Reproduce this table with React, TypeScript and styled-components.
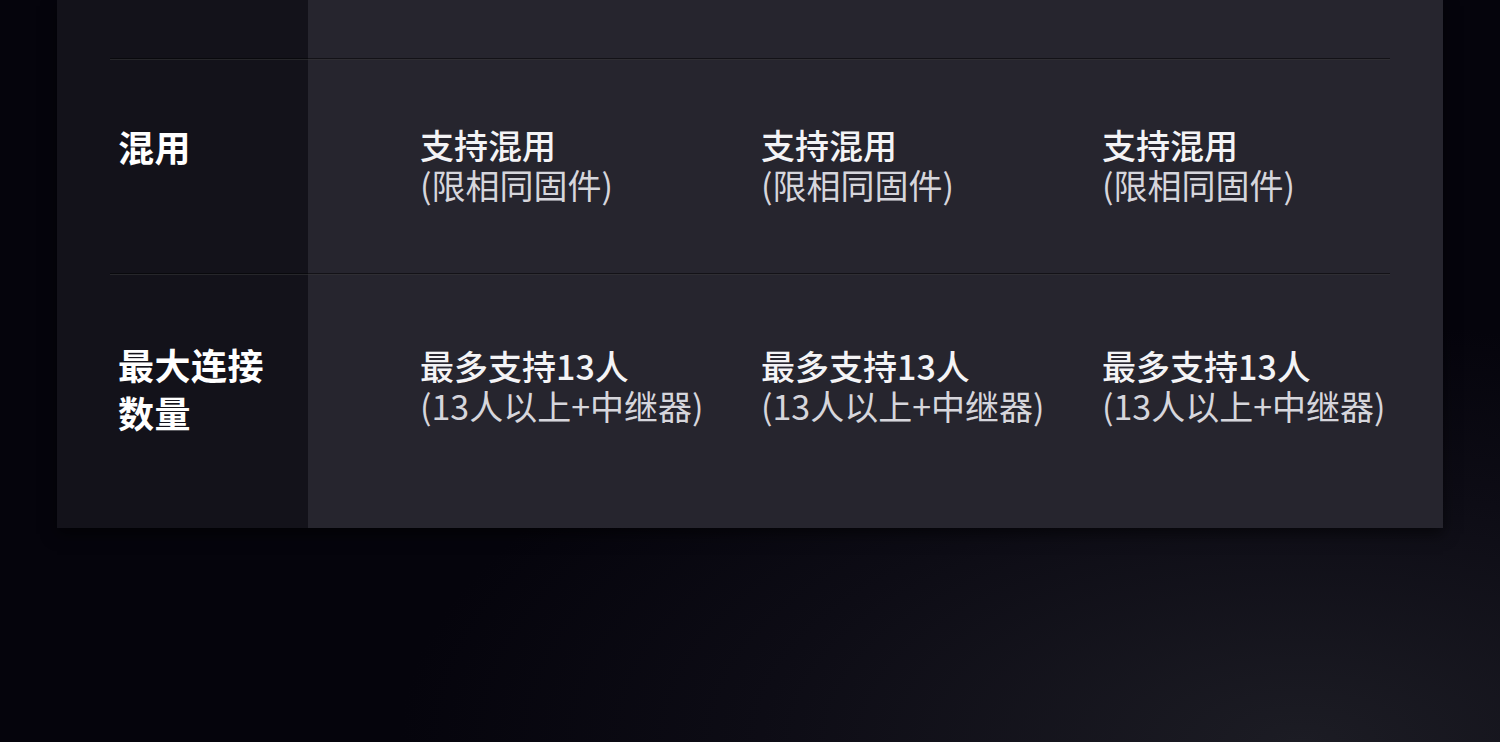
import React from 'react'
import styled, { createGlobalStyle } from 'styled-components'

const GlobalStyle = createGlobalStyle`
  html, body {
    margin: 0;
    padding: 0;
    height: 100%;
  }
  body {
    background: radial-gradient(ellipse 900px 420px at 1300px 742px, #1c1c24 0%, #0d0c15 60%, #05040c 100%), #05040c;
    background-color: #05040c;
    font-family: 'Noto Sans CJK SC', 'Noto Sans', sans-serif;
    overflow: hidden;
  }
`

type Spec = {
  label: string[]
  main: string
  note: string
  labelTop: number
  dataTop: number
  bottom: number
}

const specs: Spec[] = [
  { label: ['混用'], main: '支持混用', note: '(限相同固件)', labelTop: 64, dataTop: 67, bottom: 68 },
  {
    label: ['最大连接', '数量'],
    main: '最多支持13人',
    note: '(13人以上+中继器)',
    labelTop: 67,
    dataTop: 73,
    bottom: 92,
  },
]

const App: React.FC = () => (
  <>
    <GlobalStyle />
    <Page>
      <Table>
        <Row $height={58}>
          <LabelCell $top={0} $bottom={0} />
          <DataCell $top={0} $bottom={0} />
        </Row>
        {specs.map(spec => (
          <Row key={spec.main} $divider>
            <LabelCell $top={spec.labelTop} $bottom={spec.bottom}>
              {spec.label.map(line => (
                <LabelLine key={line}>{line}</LabelLine>
              ))}
            </LabelCell>
            <DataCell $top={spec.dataTop} $bottom={spec.bottom}>
              {[0, 1, 2].map(col => (
                <Value key={col}>
                  <Main>{spec.main}</Main>
                  <Note>{spec.note}</Note>
                </Value>
              ))}
            </DataCell>
          </Row>
        ))}
      </Table>
    </Page>
  </>
)

export default App

const Page = styled.div`
  padding-left: 57px;
  width: 1386px;
`

const Table = styled.div`
  display: flex;
  flex-direction: column;
  box-shadow: 0 6px 14px rgba(0, 0, 0, 0.55);
`

const Row = styled.div<{ $height?: number; $divider?: boolean }>`
  position: relative;
  display: grid;
  grid-template-columns: 251px 1fr;
  ${props => (props.$height ? `height: ${props.$height}px;` : '')}

  &::before {
    content: '';
    display: ${props => (props.$divider ? 'block' : 'none')};
    position: absolute;
    top: 0;
    left: 53px;
    right: 53px;
    height: 1px;
    background: rgba(0, 0, 0, 0.5);
    border-bottom: 1px solid rgba(255, 255, 255, 0.12);
    z-index: 1;
  }
`

const LabelCell = styled.div<{ $top: number; $bottom: number }>`
  background: #13121a;
  padding: ${props => props.$top}px 0 ${props => props.$bottom}px 61px;
  display: flex;
  flex-direction: column;
`

const LabelLine = styled.div`
  color: #ffffff;
  font-size: 36px;
  font-weight: 700;
  line-height: 48px;
  letter-spacing: 0.5px;
`

const DataCell = styled.div<{ $top: number; $bottom: number }>`
  background: #26252e;
  display: grid;
  grid-template-columns: repeat(3, 341px);
  align-content: start;
  padding: ${props => props.$top}px 0 ${props => props.$bottom}px 112px;
`

const Value = styled.div`
  display: flex;
  flex-direction: column;
`

const Main = styled.div`
  color: #f4f4f6;
  font-size: 34px;
  font-weight: 500;
  line-height: 40px;
  white-space: nowrap;
`

const Note = styled.div`
  color: #d6d6dc;
  font-size: 34px;
  font-weight: 400;
  line-height: 40px;
  white-space: nowrap;
`
